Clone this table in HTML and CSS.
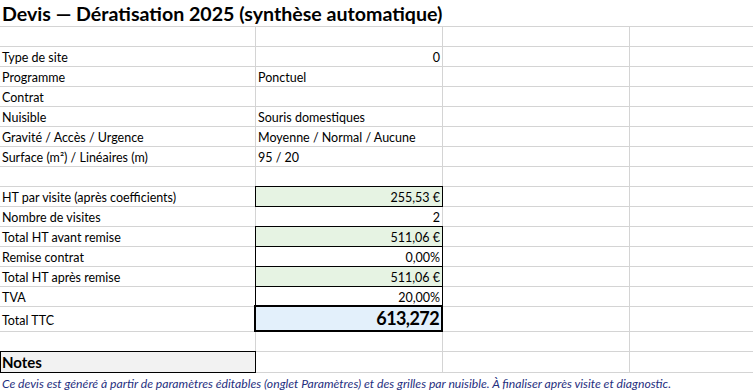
FILE: index.html
```html
<!DOCTYPE html>
<html lang="fr">
<head>
<meta charset="utf-8">
<title>Devis — Dératisation 2025</title>
<link rel="stylesheet" href="styles.css">
</head>
<body>
<div class="sheet">
  <div class="title">Devis — Dératisation 2025 (synthèse automatique)</div>

  <div class="row"><div class="cell"></div><div class="cell"></div><div class="cell"></div><div class="cell last"></div></div>
  <div class="row"><div class="cell">Type de site</div><div class="cell num">0</div><div class="cell"></div><div class="cell last"></div></div>
  <div class="row"><div class="cell">Programme</div><div class="cell">Ponctuel</div><div class="cell"></div><div class="cell last"></div></div>
  <div class="row"><div class="cell">Contrat</div><div class="cell"></div><div class="cell"></div><div class="cell last"></div></div>
  <div class="row"><div class="cell">Nuisible</div><div class="cell">Souris domestiques</div><div class="cell"></div><div class="cell last"></div></div>
  <div class="row"><div class="cell">Gravité / Accès / Urgence</div><div class="cell">Moyenne / Normal / Aucune</div><div class="cell"></div><div class="cell last"></div></div>
  <div class="row"><div class="cell">Surface (m²) / Linéaires (m)</div><div class="cell">95 / 20</div><div class="cell"></div><div class="cell last"></div></div>
  <div class="row"><div class="cell"></div><div class="cell"></div><div class="cell"></div><div class="cell last"></div></div>
  <div class="row"><div class="cell">HT par visite (après coefficients)</div><div class="cell num boxed green">255,53 €</div><div class="cell"></div><div class="cell last"></div></div>
  <div class="row"><div class="cell">Nombre de visites</div><div class="cell num">2</div><div class="cell"></div><div class="cell last"></div></div>
  <div class="row"><div class="cell">Total HT avant remise</div><div class="cell num boxed green">511,06 €</div><div class="cell"></div><div class="cell last"></div></div>
  <div class="row"><div class="cell">Remise contrat</div><div class="cell num boxed">0,00%</div><div class="cell"></div><div class="cell last"></div></div>
  <div class="row"><div class="cell">Total HT après remise</div><div class="cell num boxed green">511,06 €</div><div class="cell"></div><div class="cell last"></div></div>
  <div class="row"><div class="cell">TVA</div><div class="cell num boxed">20,00%</div><div class="cell"></div><div class="cell last"></div></div>
  <div class="row tall"><div class="cell">Total TTC</div><div class="cell num total">613,272</div><div class="cell"></div><div class="cell last"></div></div>
  <div class="row"><div class="cell"></div><div class="cell"></div><div class="cell"></div><div class="cell last"></div></div>
  <div class="row notes-row"><div class="cell notes">Notes</div><div class="cell"></div><div class="cell"></div><div class="cell last"></div></div>

  <div class="footer">Ce devis est généré à partir de paramètres éditables (onglet Paramètres) et des grilles par nuisible. À finaliser après visite et diagnostic.</div>
</div>
</body>
</html>
```

FILE: styles.css
```css
html, body {
  margin: 0;
  padding: 0;
  background: #ffffff;
}

.sheet {
  width: 753px;
  height: 392px;
  overflow: hidden;
  font-family: Lato, "Open Sans", sans-serif;
  font-size: 12.5px;
  color: #000000;
}

.title {
  height: 26px;
  border-bottom: 1px solid #d4d4d4;
  padding-left: 2px;
  font-size: 19.6px;
  font-weight: 700;
  line-height: 27px;
  white-space: nowrap;
}

.row {
  display: grid;
  grid-template-columns: 256px 187px 187px 1fr;
  height: 20px;
}

.cell {
  box-sizing: border-box;
  border-right: 1px solid #d4d4d4;
  border-bottom: 1px solid #d4d4d4;
  padding: 2px 2px 0 2px;
  line-height: 17px;
  white-space: nowrap;
  overflow: hidden;
}

.cell.last {
  border-right: none;
}

.cell.num {
  text-align: right;
}

.cell.boxed {
  border-right-color: #000000;
  border-bottom-color: #000000;
  box-shadow: -1px 0 0 #000000, 0 -1px 0 #000000, -1px -1px 0 #000000;
}

.cell.green {
  background: #e6f3e3;
}

.row.tall {
  height: 25px;
}

.row.tall .cell {
  padding-top: 3px;
  line-height: 21px;
}

.row.tall .cell.total {
  background: #e3f0fb;
  border-right: 2px solid #000000;
  border-bottom: 2px solid #000000;
  box-shadow: -2px 0 0 #000000, 0 -2px 0 #000000, -2px -2px 0 #000000;
  padding-top: 0;
  font-size: 18px;
  font-weight: 700;
  letter-spacing: -0.6px;
  line-height: 23px;
}

.row.notes-row {
  height: 21px;
}

.cell.notes {
  background: #f2f2f2;
  border-left: 1px solid #000000;
  border-right-color: #000000;
  border-bottom-color: #000000;
  box-shadow: 0 -1px 0 #000000;
  padding: 1px 1px 0 1px;
  font-size: 15px;
  font-weight: 700;
  line-height: 19px;
}

.footer {
  height: 20px;
  padding-left: 2px;
  font-size: 12.2px;
  font-style: italic;
  line-height: 21px;
  color: #1f2f80;
  white-space: nowrap;
}
```
